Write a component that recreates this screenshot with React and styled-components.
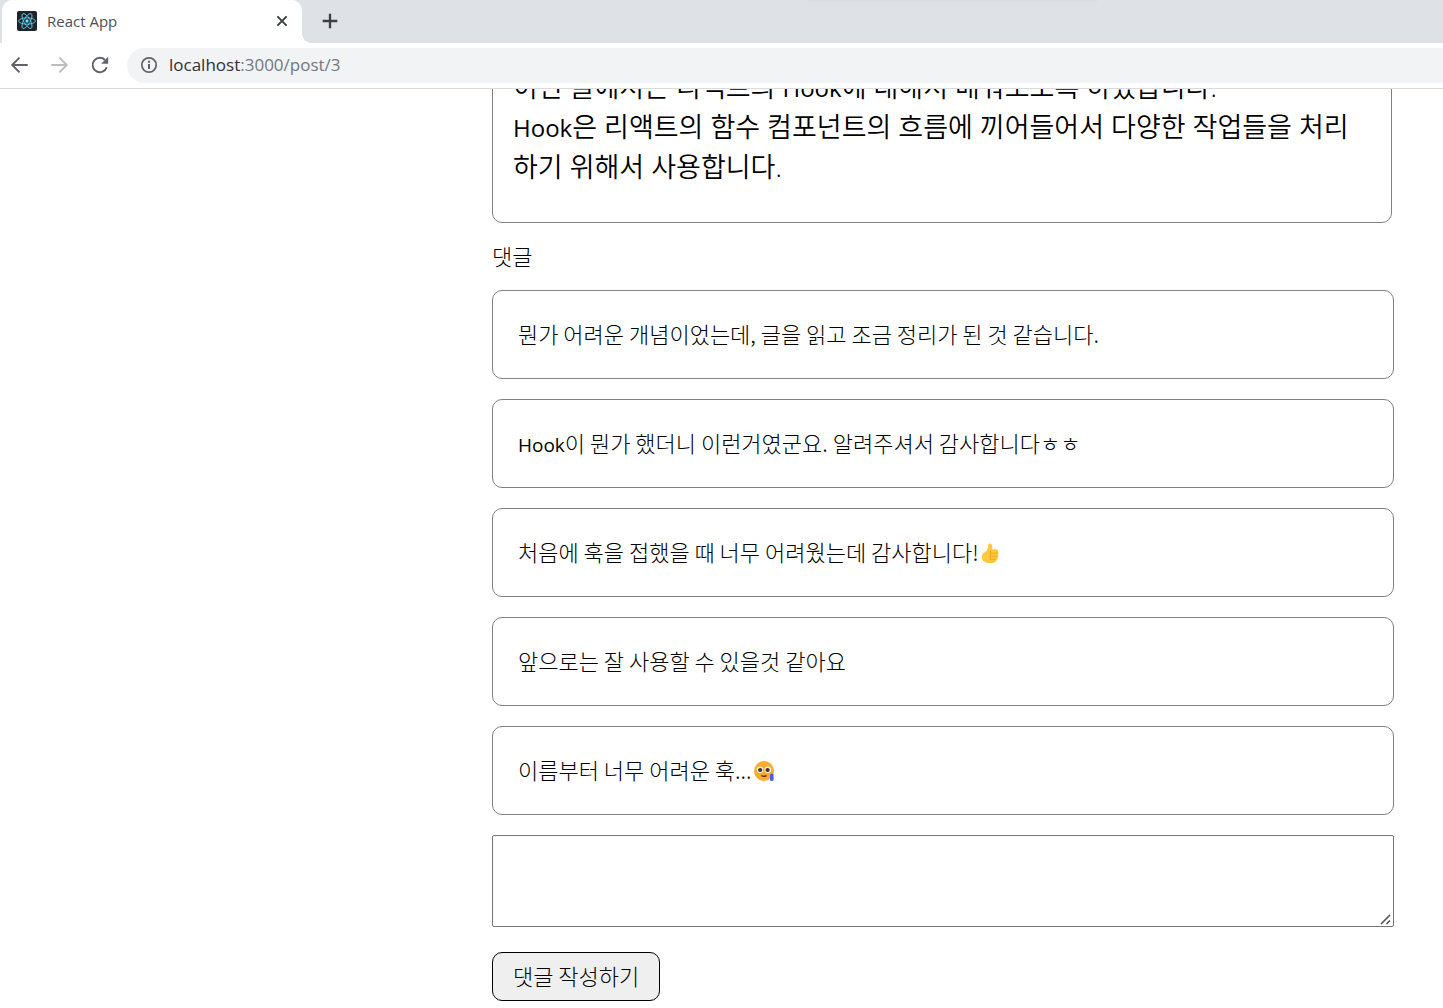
import { useState } from 'react'
import styled, { createGlobalStyle } from 'styled-components'

const GlobalStyle = createGlobalStyle`
  * {
    box-sizing: border-box;
  }
  body {
    margin: 0;
    background-color: #ffffff;
    color: #000000;
    font-family: 'Noto Sans CJK KR', sans-serif;
    font-weight: 300;
  }
`

const Browser = styled.div`
  display: flex;
  flex-direction: column;
  height: 100vh;
  overflow: hidden;
`

const TabStrip = styled.div`
  position: relative;
  display: flex;
  flex: none;
  height: 43px;
  padding-left: 2px;
  background-color: #dee1e6;

  &::before {
    content: '';
    position: absolute;
    top: 0;
    left: 56%;
    width: 20%;
    height: 3px;
    background: linear-gradient(#d8dbe0, #dee1e6);
  }
`

const Tab = styled.div`
  position: relative;
  display: flex;
  align-items: center;
  width: 300px;
  padding: 0 12px 2px 15px;
  border-radius: 10px 10px 0 0;
  background-color: #ffffff;

  &::after {
    content: '';
    position: absolute;
    right: -10px;
    bottom: 0;
    width: 10px;
    height: 10px;
    background: radial-gradient(circle at 100% 0, transparent 10px, #ffffff 10px);
  }
`

const TabTitle = styled.span`
  flex: 1;
  padding-left: 10px;
  font-family: 'Open Sans', sans-serif;
  font-size: 15px;
  font-weight: 400;
  line-height: 20px;
  color: #4c5054;
`

const IconButton = styled.button`
  display: flex;
  align-items: center;
  justify-content: center;
  width: ${(props) => props.$size}px;
  height: ${(props) => props.$size}px;
  padding: 0;
  border: none;
  background: none;
  color: ${(props) => props.$color || '#5f6368'};
  cursor: pointer;
`

const NewTab = styled(IconButton)`
  align-self: center;
  margin: 0 0 2px 18px;
`

const Toolbar = styled.div`
  display: flex;
  align-items: center;
  flex: none;
  height: 46px;
  padding-left: 10px;
  border-bottom: 1px solid #d9dadc;
  background-color: #ffffff;
`

const NavButtons = styled.div`
  display: flex;
  gap: 20px;
  padding-bottom: 2px;
`

const AddressBar = styled.div`
  display: flex;
  align-items: center;
  flex: 1;
  gap: 11px;
  height: 35px;
  margin-left: 17px;
  padding: 0 0 1px 13px;
  border-radius: 18px 0 0 18px;
  background-color: #f1f3f4;
`

const Url = styled.span`
  font-family: 'Open Sans', sans-serif;
  font-size: 17px;
  font-weight: 400;
  line-height: 24px;
  color: #74787c;
`

const Host = styled.span`
  color: #303134;
`

const Viewport = styled.div`
  flex: 1;
  overflow: hidden;
`

const Page = styled.main`
  margin-top: -43px;
  padding: 0 49px 0 492px;

  @media (max-width: 1000px) {
    padding: 0 49px;
  }
`

const PostBox = styled.article`
  margin-right: 2px;
  padding: 20px 20px 35px;
  border: 1px solid grey;
  border-radius: 10px;
`

const PostText = styled.p`
  margin: 0;
  font-family: 'Open Sans', 'Noto Sans CJK KR', sans-serif;
  font-size: 27px;
  font-weight: 350;
  line-height: 40px;
  white-space: pre-line;
`

const Latin = styled.span`
  font-family: 'Open Sans', sans-serif;
  font-size: ${(props) => props.$size}px;
  font-weight: 400;
  line-height: 1;
`

const CommentTitle = styled.h2`
  margin: 16px 0 19px;
  font-size: 22px;
  font-weight: 300;
  line-height: 32px;
`

const CommentList = styled.ul`
  display: flex;
  flex-direction: column;
  gap: 20px;
  margin: 0;
  padding: 0;
  list-style: none;
`

const Comment = styled.li`
  display: flex;
  align-items: center;
  gap: 1px;
  min-height: 89px;
  padding: 20px 25px;
  border: 1px solid grey;
  border-radius: 10px;
`

const CommentText = styled.span`
  padding-bottom: 4px;
  font-size: 22px;
  line-height: 32px;
`

const CommentForm = styled.form`
  display: flex;
  flex-direction: column;
  align-items: flex-start;
  gap: 25px;
  margin-top: 20px;
`

const CommentInput = styled.textarea`
  display: block;
  width: 100%;
  height: 92px;
  padding: 10px;
  border: 1px solid #767676;
  border-radius: 2px;
  font-family: inherit;
  font-size: 22px;

  &::-webkit-resizer {
    background: url("data:image/svg+xml,%3Csvg xmlns='http://www.w3.org/2000/svg' width='15' height='15' stroke='%23555' stroke-width='1.6'%3E%3Cpath d='M3 13l9-9M8.500 13l3.500-3.500'/%3E%3C/svg%3E")
      no-repeat right bottom;
  }
`

const SubmitButton = styled.button`
  height: 49px;
  padding: 0 20px 4px;
  border: 1px solid #000000;
  border-radius: 10px;
  background-color: #efefef;
  color: #000000;
  font-family: inherit;
  font-size: 22px;
  font-weight: 300;
  line-height: 32px;
  cursor: pointer;
`

const ReactLogo = () => (
  <svg width="20" height="20" viewBox="0 0 20 20" aria-hidden="true">
    <rect width="20" height="20" rx="2" fill="#20232a" />
    <g fill="none" stroke="#61dafb" strokeWidth="0.8">
      <ellipse cx="10" cy="10" rx="8.4" ry="3.2" />
      <ellipse cx="10" cy="10" rx="8.4" ry="3.2" transform="rotate(60 10 10)" />
      <ellipse cx="10" cy="10" rx="8.4" ry="3.2" transform="rotate(120 10 10)" />
    </g>
    <circle cx="10" cy="10" r="1.7" fill="#61dafb" />
  </svg>
)

const CloseIcon = () => (
  <svg width="16" height="16" viewBox="0 0 16 16" stroke="#3c4043" strokeWidth="2">
    <path d="M3.4 3.4l9.2 9.2M12.6 3.4l-9.2 9.2" />
  </svg>
)

const PlusIcon = () => (
  <svg width="20" height="20" viewBox="0 0 20 20" stroke="#3c4043" strokeWidth="2.3">
    <path d="M10 2.7v14.6M2.7 10h14.6" />
  </svg>
)

const ArrowIcon = ({ forward }) => (
  <svg width="20" height="20" viewBox="0 0 20 20" fill="none" stroke="currentColor" strokeWidth="1.9">
    <path d={forward ? 'M1.2 10h15.500M9.400 2.700l7.300 7.300-7.300 7.300' : 'M17.700 10h-15.500M9.500 2.700L2.200 10l7.300 7.300'} />
  </svg>
)

const ReloadIcon = () => (
  <svg width="20" height="20" viewBox="0 0 20 20" fill="none">
    <path d="M16.7 12.200A7.200 7.200 0 1 1 15 5" stroke="currentColor" strokeWidth="2" />
    <path d="M18.200 1.800v7h-7z" fill="currentColor" />
  </svg>
)

const InfoIcon = () => (
  <svg width="18" height="18" viewBox="0 0 18 18" fill="none" stroke="#5f6368" strokeWidth="2">
    <circle cx="9" cy="9" r="7.2" strokeWidth="1.7" />
    <path d="M9 8v5M9 4.8v2" />
  </svg>
)

const ThumbsUp = () => (
  <svg width="20" height="22" viewBox="0 0 20 22" role="img" aria-label="👍">
    <path
      d="M9.500 1.500c1.700-.4 2.700.9 2.700 2.600v3.200h3.900c1.500 0 2.200 1.200 1.900 2.300.8.900.8 2.100.1 3 .6 1 .4 2.200-.4 2.900.3 1.400-.3 2.500-1.400 3-.5 1.700-1.900 2.300-3.800 2.400-2.600.2-5.300.2-7.300-.7-2.300-1-3.500-3-3.400-5.300.1-2.600 1.800-3.900 3.500-5.200C7.400 8.100 8.100 6.400 8.200 3.500c0-1 .4-1.800 1.300-2z"
      fill="#ffc83d"
    />
    <path
      d="M10.500 8.400v9.600M10.500 11.100h7M10.500 14.200h6.700M10.500 17.300h5.500"
      fill="none"
      stroke="#f3a325"
      strokeWidth="0.9"
    />
  </svg>
)

const SadFace = () => (
  <svg width="22" height="22" viewBox="0 0 22 22" role="img" aria-label="🥲">
    <circle cx="11" cy="11" r="10" fill="#fcab2f" />
    <circle cx="7" cy="9.8" r="3.3" fill="#f4f1e8" />
    <circle cx="14.8" cy="9.8" r="3.3" fill="#f4f1e8" />
    <circle cx="7.2" cy="10" r="2.1" fill="#45302b" />
    <circle cx="14.6" cy="10" r="2.1" fill="#45302b" />
    <path d="M8.3 15.4q2.7 2 5.2 0" fill="none" stroke="#5b3422" strokeWidth="1.4" />
    <path d="M17 14.5q1.800-2 3.600 0v5q0 1.500-1.800 1.500T17 19.500z" fill="#4661e8" />
  </svg>
)

const comments = [
  { id: 1, content: '뭔가 어려운 개념이었는데, 글을 읽고 조금 정리가 된 것 같습니다.' },
  { id: 2, content: 'Hook이 뭔가 했더니 이런거였군요. 알려주셔서 감사합니다ㅎㅎ' },
  { id: 3, content: '처음에 훅을 접했을 때 너무 어려웠는데 감사합니다!', Emoji: ThumbsUp },
  { id: 4, content: '앞으로는 잘 사용할 수 있을것 같아요' },
  { id: 5, content: '이름부터 너무 어려운 훅...', Emoji: SadFace },
]

const post = `이번 글에서는 리액트의 Hook에 대해서 배워보도록 하겠습니다.
Hook은 리액트의 함수 컴포넌트의 흐름에 끼어들어서 다양한 작업들을 처리하기 위해서 사용합니다.`

// Latin words are set smaller than the Hangul around them
const MixedText = ({ text, latinSize }) =>
  text
    .split(/([A-Za-z]+)/)
    .map((part, i) => (i % 2 ? <Latin key={i} $size={latinSize}>{part}</Latin> : part))

const App = () => {
  const [comment, setComment] = useState('')

  return (
    <>
      <GlobalStyle />
      <Browser>
        <TabStrip>
          <Tab>
            <ReactLogo />
            <TabTitle>React App</TabTitle>
            <IconButton $size={16} aria-label="Close tab">
              <CloseIcon />
            </IconButton>
          </Tab>
          <NewTab $size={20} aria-label="New tab">
            <PlusIcon />
          </NewTab>
        </TabStrip>
        <Toolbar>
          <NavButtons>
            <IconButton $size={20} aria-label="Back">
              <ArrowIcon />
            </IconButton>
            <IconButton $size={20} $color="#babcbe" aria-label="Forward">
              <ArrowIcon forward />
            </IconButton>
            <IconButton $size={20} aria-label="Reload">
              <ReloadIcon />
            </IconButton>
          </NavButtons>
          <AddressBar>
            <InfoIcon />
            <Url>
              <Host>localhost</Host>:3000/post/3
            </Url>
          </AddressBar>
        </Toolbar>
        <Viewport>
          <Page>
            <PostBox>
              <PostText>
                <MixedText text={post} latinSize={24} />
              </PostText>
            </PostBox>
            <CommentTitle>댓글</CommentTitle>
            <CommentList>
              {comments.map(({ id, content, Emoji }) => (
                <Comment key={id}>
                  <CommentText>
                    <MixedText text={content} latinSize={19} />
                  </CommentText>
                  {Emoji && <Emoji />}
                </Comment>
              ))}
            </CommentList>
            <CommentForm onSubmit={(e) => e.preventDefault()}>
              <CommentInput
                aria-label="댓글"
                value={comment}
                onChange={(e) => setComment(e.target.value)}
              />
              <SubmitButton type="submit">댓글 작성하기</SubmitButton>
            </CommentForm>
          </Page>
        </Viewport>
      </Browser>
    </>
  )
}

export default App
